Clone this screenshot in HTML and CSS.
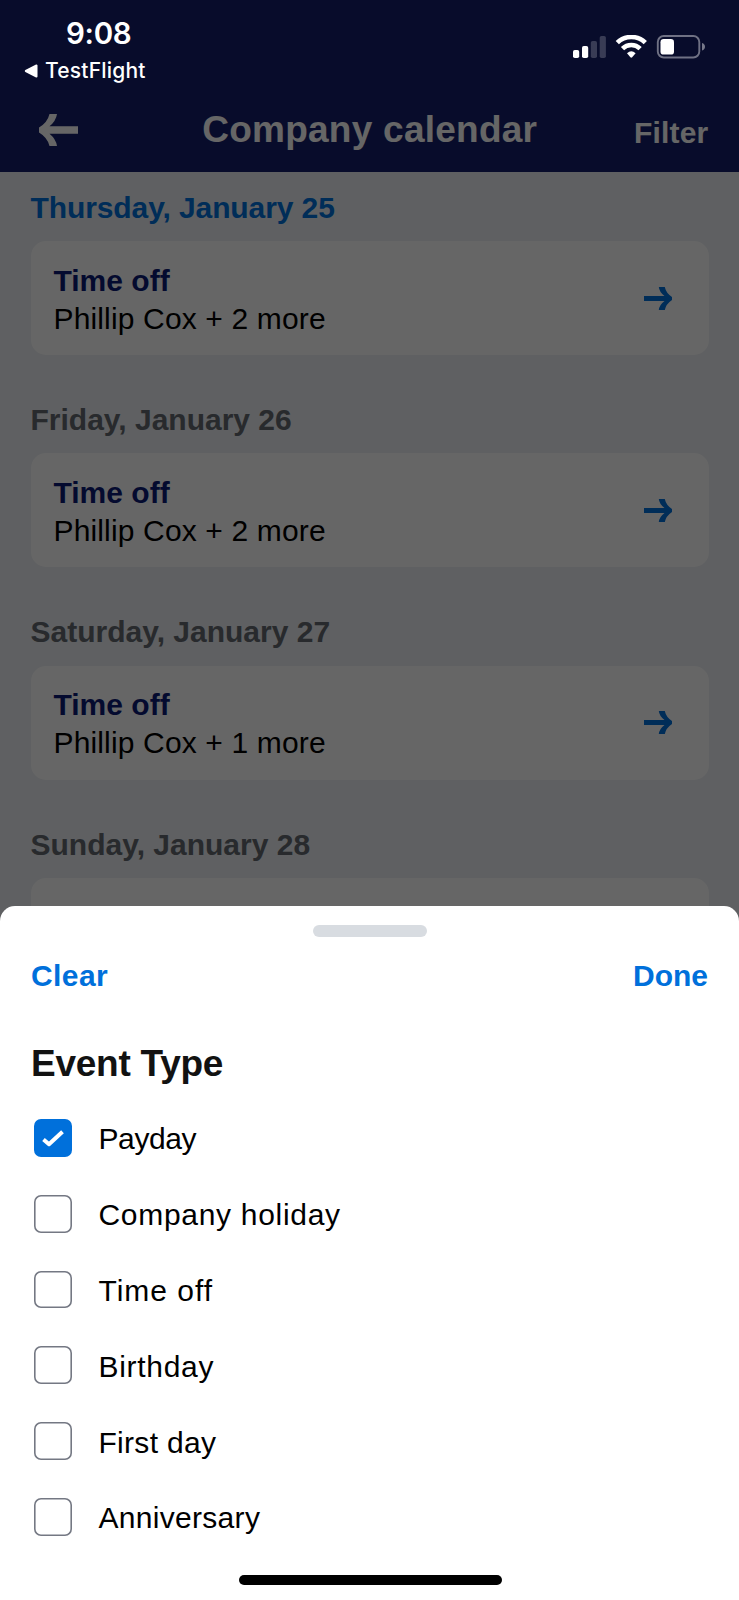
FILE: index.html
```html
<!DOCTYPE html>
<html lang="en">
<head>
  <meta charset="UTF-8" />
  <meta name="viewport" content="width=device-width, initial-scale=1.0"/>
  <title>Company calendar</title>
  <link rel="stylesheet" href="styles.css">
</head>
<body>

  <svg class="defs" width="0" height="0">
    <symbol id="arrow" viewBox="0 0 28 23">
      <path d="M0 9H20.5Q15.300 5 14.800 0H20.800Q22 6 28 10V13Q22 17 20.800 23H14.800Q15.300 18 20.500 14H0Z"/>
    </symbol>
  </svg>

  <div class="screen">
    <header class="header">
      <div class="status-bar">
        <div class="status-left">
          <div class="time">9:08</div>
          <div class="back-app">
            <svg width="14" height="14" viewBox="0 0 14 14"><path d="M12.5 1.5V12.5L1.8 7Z" fill="#fff" stroke="#fff" stroke-width="2" stroke-linejoin="round"/></svg>
            <span>TestFlight</span>
          </div>
        </div>
        <svg class="status-icons" width="133" height="24" viewBox="0 0 133 24">
          <g fill="#fff">
            <rect x="0" y="15" width="6.2" height="8" rx="1.8"/>
            <rect x="9" y="11" width="6.2" height="12" rx="1.8"/>
            <rect x="17.8" y="6" width="6.2" height="17" rx="1.8" opacity=".2"/>
            <rect x="26.7" y="1" width="6.2" height="22" rx="1.8" opacity=".2"/>
          </g>
          <g fill="none" stroke="#fff" stroke-width="4.6">
            <path d="M44.3 7.7A20 20 0 0 1 72.3 7.7"/>
            <path d="M49.5 13.6A12.5 12.5 0 0 1 67.1 13.6"/>
          </g>
          <path d="M54 18.3Q58.3 14.3 62.6 18.3L59.2 22.3Q58.3 23.1 57.4 22.3Z" fill="#fff"/>
          <rect x="84.8" y="1" width="41.5" height="21.5" rx="6" fill="none" stroke="#fff" stroke-width="1.9" opacity=".42"/>
          <rect x="87.5" y="4" width="13.5" height="15.6" rx="3.2" fill="#fff"/>
          <path d="M129 8Q132 9 132 11.7Q132 14.5 129 15.4Z" fill="#fff" opacity=".45"/>
        </svg>
      </div>
      <div class="nav">
        <svg class="nav-back" viewBox="0 0 39 32">
          <path d="M39 12.3H10.5Q17 7 18 0H10.5Q8.5 8.5 0 13.5V18.5Q8.5 23.5 10.5 32H18Q17 25 10.5 19.7H39Z"/>
        </svg>
        <h1>Company calendar</h1>
        <div class="nav-filter">Filter</div>
      </div>
    </header>

    <main class="days">
      <section class="day today">
        <h2>Thursday, January 25</h2>
        <div class="card">
          <div class="card-text">
            <div class="card-title">Time off</div>
            <div class="card-people">Phillip Cox + 2 more</div>
          </div>
          <svg class="card-arrow"><use href="#arrow"/></svg>
        </div>
      </section>
      <section class="day">
        <h2>Friday, January 26</h2>
        <div class="card">
          <div class="card-text">
            <div class="card-title">Time off</div>
            <div class="card-people">Phillip Cox + 2 more</div>
          </div>
          <svg class="card-arrow"><use href="#arrow"/></svg>
        </div>
      </section>
      <section class="day">
        <h2>Saturday, January 27</h2>
        <div class="card">
          <div class="card-text">
            <div class="card-title">Time off</div>
            <div class="card-people">Phillip Cox + 1 more</div>
          </div>
          <svg class="card-arrow"><use href="#arrow"/></svg>
        </div>
      </section>
      <section class="day">
        <h2>Sunday, January 28</h2>
        <div class="card">
          <div class="card-text">
            <div class="card-title">Time off</div>
          </div>
        </div>
      </section>
    </main>

    <div class="overlay"></div>

    <div class="sheet">
      <div class="handle"></div>
      <div class="sheet-actions">
        <div>Clear</div>
        <div class="done">Done</div>
      </div>
      <h3>Event Type</h3>
      <div class="options">
        <div class="option payday">
          <div class="checkbox checked">
            <svg width="24" height="18" viewBox="0 0 24 18"><path d="M2.5 10.5L8 15.2L21.5 2.8" fill="none" stroke="#fff" stroke-width="4" stroke-linejoin="round"/></svg>
          </div>
          <span>Payday</span>
        </div>
        <div class="option"><div class="checkbox"></div><span>Company holiday</span></div>
        <div class="option time-off"><div class="checkbox"></div><span>Time off</span></div>
        <div class="option"><div class="checkbox"></div><span>Birthday</span></div>
        <div class="option tight"><div class="checkbox"></div><span>First day</span></div>
        <div class="option tight"><div class="checkbox"></div><span>Anniversary</span></div>
      </div>
      <div class="home-indicator"></div>
    </div>
  </div>

</body>
</html>
```

FILE: styles.css
```css
* {
  box-sizing: border-box;
}

body {
  margin: 0;
  font-family: "Liberation Sans", Arial, sans-serif;
  font-size: 30px;
  color: #000;
}

h1, h2, h3 {
  margin: 0;
}

.defs {
  display: block;
}

.screen {
  position: relative;
  width: 739px;
  height: 1600px;
  overflow: hidden;
  background-color: #edf0f4;
}

/* header */
.header {
  height: 172px;
  background-color: #14206b;
  color: #fff;
}

.status-bar {
  position: relative;
  z-index: 2;
  display: flex;
  justify-content: space-between;
  height: 88px;
  padding: 15px 33px 0 24px;
  font-family: Inter, sans-serif;
}

.time {
  padding-left: 42px;
  font-size: 29.5px;
  font-weight: 600;
  line-height: 36px;
  letter-spacing: -0.3px;
}

.back-app {
  display: flex;
  align-items: center;
  gap: 7px;
  margin-top: 6px;
  font-size: 21px;
  font-weight: 500;
  line-height: 27px;
  letter-spacing: 0.2px;
}

.status-icons {
  margin-top: 20px;
}

.nav {
  display: grid;
  grid-template-columns: 1fr auto 1fr;
  align-items: center;
  height: 84px;
  padding: 0 30.5px 0 39px;
}

.nav-back {
  width: 39px;
  height: 32px;
  fill: #fff;
}

.nav h1 {
  margin-left: -8px;
  font-size: 37px;
  line-height: 44px;
  letter-spacing: 0.25px;
}

.nav-filter {
  padding-top: 6px;
  text-align: right;
  font-weight: bold;
  letter-spacing: 0.2px;
}

/* calendar list */
.days {
  padding: 0 30.5px;
}

.day {
  height: 212.4px;
}

.day h2 {
  height: 69px;
  padding-top: 15.6px;
  font-size: 30px;
  line-height: 40px;
  color: #646a70;
}

.day.today h2 {
  letter-spacing: -0.1px;
  color: #0070db;
}

.card {
  display: flex;
  align-items: center;
  justify-content: space-between;
  height: 114px;
  padding: 0 36.5px 0 23px;
  border-radius: 15px;
  background-color: #fff;
}

.card-text {
  height: 76px;
  padding-top: 1.5px;
  line-height: 38px;
}

.day:last-child .card-text {
  padding-top: 4px;
}

.card-title {
  font-weight: bold;
  color: #0c1b75;
}

.card-people {
  letter-spacing: 0.15px;
}

.card-arrow {
  width: 28px;
  height: 23px;
  fill: #0070db;
}

.overlay {
  position: absolute;
  inset: 0;
  background-color: rgba(0, 0, 0, 0.6);
}

/* bottom sheet */
.sheet {
  position: absolute;
  left: 0;
  right: 0;
  bottom: 0;
  height: 694px;
  padding: 19px 31px 0;
  border-radius: 15px 15px 0 0;
  background-color: #fff;
}

.handle {
  width: 114px;
  height: 11.5px;
  margin: 0 auto;
  border-radius: 6px;
  background-color: #d8dce1;
}

.sheet-actions {
  display: flex;
  justify-content: space-between;
  margin-top: 19px;
  font-weight: bold;
  line-height: 40px;
  letter-spacing: 0.4px;
  color: #0070db;
}

.done {
  letter-spacing: 0;
}

.sheet h3 {
  margin-top: 45px;
  font-size: 37px;
  line-height: 46px;
  letter-spacing: -0.25px;
  color: #121212;
}

.options {
  margin-top: 13.5px;
}

.option {
  display: flex;
  align-items: center;
  gap: 26.5px;
  height: 75.8px;
  padding-left: 3.3px;
  letter-spacing: 0.7px;
}

.option span {
  padding-top: 3px;
}

.option.payday {
  letter-spacing: -0.4px;
}

.option.time-off {
  letter-spacing: 1px;
}

.option.tight {
  letter-spacing: 0.3px;
}

.checkbox {
  display: flex;
  align-items: center;
  justify-content: center;
  width: 37.7px;
  height: 37.7px;
  border-radius: 7px;
  box-shadow: inset 0 0 0 1.6px #747883;
}

.checkbox.checked {
  box-shadow: none;
  background-color: #0070db;
}

.home-indicator {
  position: absolute;
  left: 238.5px;
  bottom: 15px;
  width: 263px;
  height: 10px;
  border-radius: 5px;
  background-color: #000;
}
```
